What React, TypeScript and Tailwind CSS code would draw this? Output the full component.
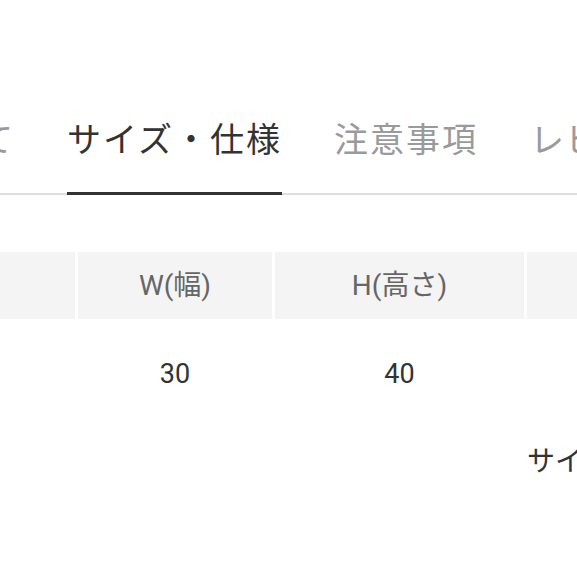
import React from "react";

const tabs = [
  { label: "について", active: false },
  { label: "サイズ・仕様", active: true },
  { label: "注意事項", active: false },
  { label: "レビュー", active: false },
];

// column widths: first column starts off-screen on the left
const cols = ["w-[194px]", "w-[194px]", "w-[249px]", "w-[249px]"];
const headers = ["", "W(幅)", "H(高さ)", "D(奥行)"];
const values = ["", "30", "40", "20"];

const App = () => {
  return (
    <div
      className="w-[577px] h-[577px] overflow-hidden bg-white pt-[121px]"
      style={{ fontFamily: 'Roboto, "Noto Sans CJK JP", sans-serif' }}
    >
      {/* Tabs */}
      <div className="flex w-max -ml-[128px] gap-[52px] border-b-2 border-[#dedede]">
        {tabs.map((t) => (
          <div
            key={t.label}
            className={
              t.active
                ? "shrink-0 pb-[37px] text-[34px] leading-[34px] tracking-[2px] text-[#333] border-b-[3px] border-[#333] -mb-[2px]"
                : "shrink-0 pb-[38px] text-[34px] leading-[34px] tracking-[2px] text-[#9a9a9a]"
            }
            style={{ fontFamily: '"Noto Sans CJK JP", sans-serif' }}
          >
            {t.label}
          </div>
        ))}
      </div>

      {/* Size table */}
      <div className="mt-[57px] -ml-[119px] w-max">
        <div className="flex gap-[3px]">
          {headers.map((h, i) => (
            <div
              key={i}
              className={`${cols[i]} shrink-0 h-[67px] bg-[#f4f4f4] flex items-center justify-center text-[28px] text-[#666]`}
            >
              {h}
            </div>
          ))}
        </div>
        <div className="flex gap-[3px]">
          {values.map((v, i) => (
            <div
              key={i}
              className={`${cols[i]} shrink-0 h-[110px] flex items-center justify-center text-[27px] text-[#333]`}
            >
              {v}
            </div>
          ))}
        </div>
        <div className="flex gap-[3px] mt-[12px]">
          <div className={`${cols[0]} shrink-0`} />
          <div className={`${cols[1]} shrink-0`} />
          <div className={`${cols[2]} shrink-0`} />
          <div
            className={`${cols[3]} shrink-0 whitespace-nowrap text-[28px] leading-[36px] text-[#333]`}
            style={{ fontFamily: '"Noto Sans CJK JP", sans-serif' }}
          >
            サイズの測り方
          </div>
        </div>
      </div>
    </div>
  );
};

export default App;
